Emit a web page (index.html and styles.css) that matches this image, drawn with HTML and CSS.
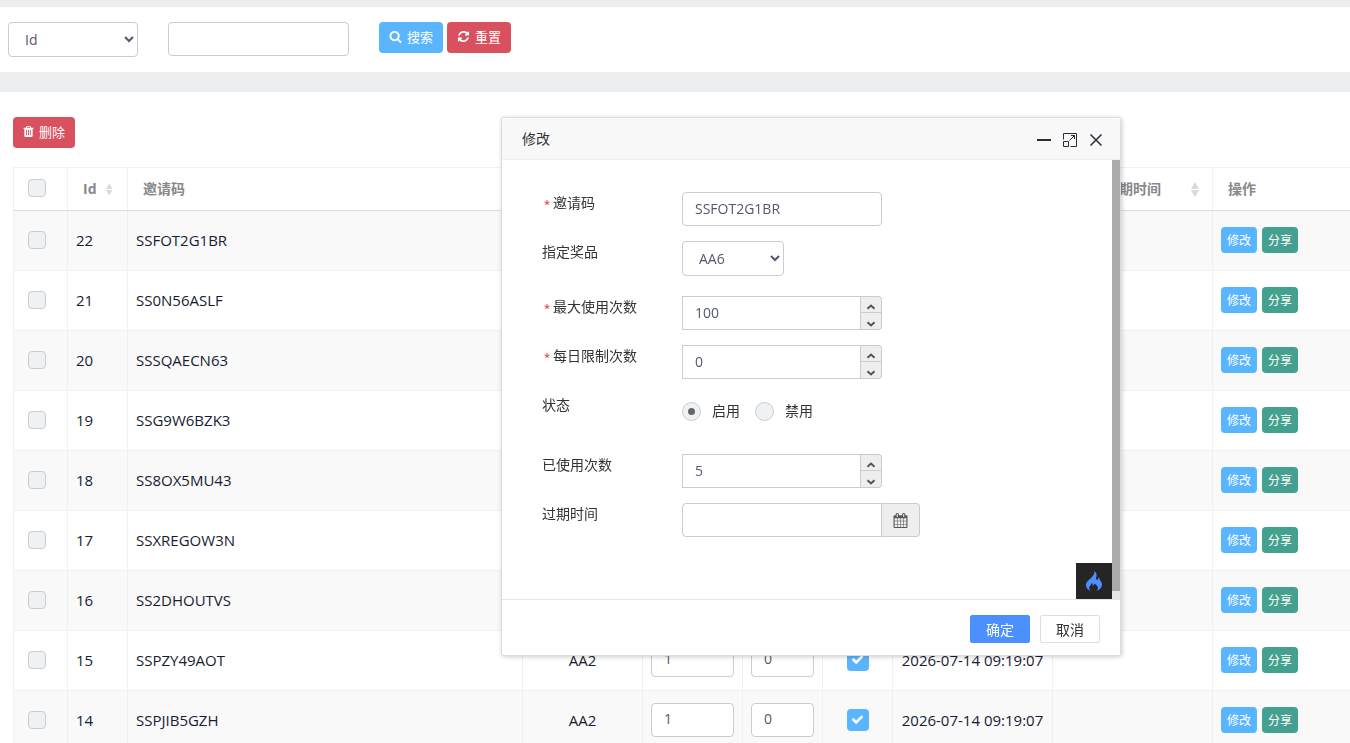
FILE: index.html
```html
<!DOCTYPE html>
<html lang="zh-CN">
<head>
  <meta charset="utf-8">
  <title>邀请码</title>
  <link rel="stylesheet" href="styles.css">
</head>

<body>
  <!-- shared icons -->
  <svg class="sprite" aria-hidden="true">
    <symbol id="icon-search" viewBox="0 0 1792 1792"><path d="M1216 832q0-185-131.500-316.500t-316.500-131.500-316.500 131.500-131.500 316.500 131.500 316.500 316.500 131.500 316.500-131.500 131.500-316.500zm512 832q0 52-38 90t-90 38q-54 0-90-38l-343-342q-179 124-399 124-143 0-273.500-55.500t-225-150-150-225-55.500-273.500 55.500-273.500 150-225 225-150 273.500-55.500 273.500 55.500 225 150 150 225 55.500 273.500q0 220-124 399l343 343q37 37 37 90z"/></symbol>
    <symbol id="icon-refresh" viewBox="0 0 1792 1792"><path d="M1639 1056q0 5-1 7-64 268-268 434.500t-478 166.500q-146 0-282.500-55t-243.500-157l-129 129q-19 19-45 19t-45-19-19-45v-448q0-26 19-45t45-19h448q26 0 45 19t19 45-19 45l-137 137q71 66 161 102t187 36q134 0 250-65t186-179q11-17 53-117 8-23 30-23h192q13 0 22.500 9.500t9.500 22.500zm25-800v448q0 26-19 45t-45 19h-448q-26 0-45-19t-19-45 19-45l138-138q-148-137-349-137-134 0-250 65t-186 179q-11 17-53 117-8 23-30 23h-199q-13 0-22.500-9.500t-9.500-22.500v-7q65-268 270-434.500t480-166.500q146 0 284 55.500t245 156.500l130-129q19-19 45-19t45 19 19 45z"/></symbol>
    <symbol id="icon-trash" viewBox="192 0 1408 1792"><path d="M704 1376v-704q0-14-9-23t-23-9h-64q-14 0-23 9t-9 23v704q0 14 9 23t23 9h64q14 0 23-9t9-23zm256 0v-704q0-14-9-23t-23-9h-64q-14 0-23 9t-9 23v704q0 14 9 23t23 9h64q14 0 23-9t9-23zm256 0v-704q0-14-9-23t-23-9h-64q-14 0-23 9t-9 23v704q0 14 9 23t23 9h64q14 0 23-9t9-23zm-544-992h448l-48-117q-7-9-17-11h-317q-10 2-17 11zm928 32v64q0 14-9 23t-23 9h-96v948q0 83-47 143.500t-113 60.500h-832q-66 0-113-58.500t-47-141.500v-952h-96q-14 0-23-9t-9-23v-64q0-14 9-23t23-9h309l70-167q15-37 54-63t79-26h320q40 0 79 26t54 63l70 167h309q14 0 23 9t9 23z"/></symbol>
    <symbol id="icon-check" viewBox="0 0 1792 1792"><path d="M1671 566q0 40-28 68l-724 724-136 136q-28 28-68 28t-68-28l-136-136-362-362q-28-28-28-68t28-68l136-136q28-28 68-28t68 28l294 295 656-657q28-28 68-28t68 28l136 136q28 28 28 68z"/></symbol>
    <symbol id="icon-calendar" viewBox="0 0 1792 1792"><path d="M192 1664h288v-288h-288v288zm352 0h320v-288h-320v288zm-352-352h288v-320h-288v320zm352 0h320v-320h-320v320zm-352-384h288v-288h-288v288zm736 736h320v-288h-320v288zm-384-736h320v-288h-320v288zm768 736h288v-288h-288v288zm-384-352h320v-320h-320v320zm-352-864v-288q0-13-9.500-22.500t-22.500-9.500h-64q-13 0-22.500 9.500t-9.500 22.500v288q0 13 9.500 22.500t22.500 9.500h64q13 0 22.500-9.500t9.500-22.500zm736 864h288v-320h-288v320zm-384-384h320v-288h-320v288zm384 0h288v-288h-288v288zm32-480v-288q0-13-9.500-22.500t-22.500-9.500h-64q-13 0-22.500 9.500t-9.500 22.500v288q0 13 9.500 22.500t22.500 9.500h64q13 0 22.500-9.500t9.500-22.500zm384-64v1280q0 52-38 90t-90 38h-1408q-52 0-90-38t-38-90v-1280q0-52 38-90t90-38h128v-96q0-66 47-113t113-47h64q66 0 113 47t47 113v96h384v-96q0-66 47-113t113-47h64q66 0 113 47t47 113v96h128q52 0 90 38t38 90z"/></symbol>
    <symbol id="icon-up" viewBox="0 0 10 6"><path d="M1.500 4.800L5 1.500l3.500 3.300" fill="none" stroke="currentColor" stroke-width="2"/></symbol>
    <symbol id="icon-down" viewBox="0 0 10 6"><path d="M1.500 1.200L5 4.500l3.500-3.300" fill="none" stroke="currentColor" stroke-width="2"/></symbol>
    <symbol id="icon-sort" viewBox="0 0 8 15"><path d="M4 0l4 7H0zM4 15l4-7H0z"/></symbol>
  </svg>

  <form class="search-bar">
    <select class="form-control search-field" aria-label="字段">
      <option>Id</option>
    </select>
    <input type="text" class="form-control search-keyword" aria-label="关键字">
    <div class="search-buttons">
      <button type="button" class="btn blue"><svg class="icon"><use href="#icon-search"/></svg>搜索</button>
      <button type="button" class="btn red"><svg class="icon"><use href="#icon-refresh"/></svg>重置</button>
    </div>
  </form>

  <main class="portlet">
    <button type="button" class="btn red"><svg class="icon icon-trash"><use href="#icon-trash"/></svg>删除</button>

    <table class="data-table">
      <colgroup>
        <col class="col-check">
        <col class="col-id">
        <col class="col-code">
        <col class="col-prize">
        <col class="col-max">
        <col class="col-day">
        <col class="col-status">
        <col class="col-time">
        <col class="col-time">
        <col>
      </colgroup>
      <thead>
        <tr>
          <th><input type="checkbox" class="check" aria-label="全选"></th>
          <th><div class="sortable">Id<svg class="sort"><use href="#icon-sort"/></svg></div></th>
          <th>邀请码</th>
          <th></th>
          <th></th>
          <th></th>
          <th></th>
          <th></th>
          <th><div class="sortable spread"><span>过期时间</span><svg class="sort"><use href="#icon-sort"/></svg></div></th>
          <th>操作</th>
        </tr>
      </thead>
      <tbody>
        <tr>
          <td><input type="checkbox" class="check" aria-label="22"></td>
          <td>22</td>
          <td>SSFOT2G1BR</td>
          <td></td><td></td><td></td><td></td><td></td><td></td>
          <td><div class="actions"><button type="button" class="btn-xs blue">修改</button><button type="button" class="btn-xs green">分享</button></div></td>
        </tr>
        <tr>
          <td><input type="checkbox" class="check" aria-label="21"></td>
          <td>21</td>
          <td>SS0N56ASLF</td>
          <td></td><td></td><td></td><td></td><td></td><td></td>
          <td><div class="actions"><button type="button" class="btn-xs blue">修改</button><button type="button" class="btn-xs green">分享</button></div></td>
        </tr>
        <tr>
          <td><input type="checkbox" class="check" aria-label="20"></td>
          <td>20</td>
          <td>SSSQAECN63</td>
          <td></td><td></td><td></td><td></td><td></td><td></td>
          <td><div class="actions"><button type="button" class="btn-xs blue">修改</button><button type="button" class="btn-xs green">分享</button></div></td>
        </tr>
        <tr>
          <td><input type="checkbox" class="check" aria-label="19"></td>
          <td>19</td>
          <td>SSG9W6BZK3</td>
          <td></td><td></td><td></td><td></td><td></td><td></td>
          <td><div class="actions"><button type="button" class="btn-xs blue">修改</button><button type="button" class="btn-xs green">分享</button></div></td>
        </tr>
        <tr>
          <td><input type="checkbox" class="check" aria-label="18"></td>
          <td>18</td>
          <td>SS8OX5MU43</td>
          <td></td><td></td><td></td><td></td><td></td><td></td>
          <td><div class="actions"><button type="button" class="btn-xs blue">修改</button><button type="button" class="btn-xs green">分享</button></div></td>
        </tr>
        <tr>
          <td><input type="checkbox" class="check" aria-label="17"></td>
          <td>17</td>
          <td>SSXREGOW3N</td>
          <td></td><td></td><td></td><td></td><td></td><td></td>
          <td><div class="actions"><button type="button" class="btn-xs blue">修改</button><button type="button" class="btn-xs green">分享</button></div></td>
        </tr>
        <tr>
          <td><input type="checkbox" class="check" aria-label="16"></td>
          <td>16</td>
          <td>SS2DHOUTVS</td>
          <td></td><td></td><td></td><td></td><td></td><td></td>
          <td><div class="actions"><button type="button" class="btn-xs blue">修改</button><button type="button" class="btn-xs green">分享</button></div></td>
        </tr>
        <tr>
          <td><input type="checkbox" class="check" aria-label="15"></td>
          <td>15</td>
          <td>SSPZY49AOT</td>
          <td class="center">AA2</td>
          <td><input type="text" class="form-control" value="1" aria-label="最大使用次数"></td>
          <td><input type="text" class="form-control" value="0" aria-label="每日限制次数"></td>
          <td class="center"><button type="button" class="status blue" aria-label="启用"><svg class="icon"><use href="#icon-check"/></svg></button></td>
          <td class="center">2026-07-14 09:19:07</td>
          <td></td>
          <td><div class="actions"><button type="button" class="btn-xs blue">修改</button><button type="button" class="btn-xs green">分享</button></div></td>
        </tr>
        <tr>
          <td><input type="checkbox" class="check" aria-label="14"></td>
          <td>14</td>
          <td>SSPJIB5GZH</td>
          <td class="center">AA2</td>
          <td><input type="text" class="form-control" value="1" aria-label="最大使用次数"></td>
          <td><input type="text" class="form-control" value="0" aria-label="每日限制次数"></td>
          <td class="center"><button type="button" class="status blue" aria-label="启用"><svg class="icon"><use href="#icon-check"/></svg></button></td>
          <td class="center">2026-07-14 09:19:07</td>
          <td></td>
          <td><div class="actions"><button type="button" class="btn-xs blue">修改</button><button type="button" class="btn-xs green">分享</button></div></td>
        </tr>
      </tbody>
    </table>
  </main>

  <div class="layer" role="dialog" aria-labelledby="layer-title">
    <div class="layer-title">
      <span id="layer-title">修改</span>
      <div class="layer-tools">
        <button type="button" aria-label="最小化"><svg viewBox="0 0 16 16"><path d="M1 8h14" stroke-width="2"/></svg></button>
        <button type="button" aria-label="最大化"><svg viewBox="0 0 16 16"><path d="M1.500 7.500v-6h13v13h-6M1.500 9.500h5v5h-5zM7.500 8.500l5-5M9 3.500h3.500V7"/></svg></button>
        <button type="button" aria-label="关闭"><svg viewBox="0 0 16 16"><path d="M2.500 2.500l11 11M13.500 2.500l-11 11" stroke-width="1.500"/></svg></button>
      </div>
    </div>

    <div class="layer-body">
      <form class="layer-form">
        <div class="form-group">
          <label for="code"><span class="required">*</span>邀请码</label>
          <input type="text" id="code" class="form-control" value="SSFOT2G1BR">
        </div>
        <div class="form-group tall">
          <label for="prize">指定奖品</label>
          <select id="prize" class="form-control">
            <option>AA6</option>
          </select>
        </div>
        <div class="form-group">
          <label for="max"><span class="required">*</span>最大使用次数</label>
          <div class="spinner">
            <input type="text" id="max" class="form-control" value="100">
            <div class="spinner-buttons">
              <button type="button" aria-label="增加"><svg><use href="#icon-up"/></svg></button>
              <button type="button" aria-label="减少"><svg><use href="#icon-down"/></svg></button>
            </div>
          </div>
        </div>
        <div class="form-group">
          <label for="day"><span class="required">*</span>每日限制次数</label>
          <div class="spinner">
            <input type="text" id="day" class="form-control" value="0">
            <div class="spinner-buttons">
              <button type="button" aria-label="增加"><svg><use href="#icon-up"/></svg></button>
              <button type="button" aria-label="减少"><svg><use href="#icon-down"/></svg></button>
            </div>
          </div>
        </div>
        <div class="form-group radio-group" role="radiogroup" aria-labelledby="status-label">
          <span class="label" id="status-label">状态</span>
          <div class="radios">
            <label><input type="radio" name="status" checked>启用</label>
            <label><input type="radio" name="status">禁用</label>
          </div>
        </div>
        <div class="form-group">
          <label for="used">已使用次数</label>
          <div class="spinner">
            <input type="text" id="used" class="form-control" value="5">
            <div class="spinner-buttons">
              <button type="button" aria-label="增加"><svg><use href="#icon-up"/></svg></button>
              <button type="button" aria-label="减少"><svg><use href="#icon-down"/></svg></button>
            </div>
          </div>
        </div>
        <div class="form-group">
          <label for="expire">过期时间</label>
          <div class="date-picker">
            <input type="text" id="expire" class="form-control">
            <button type="button" aria-label="选择日期"><svg class="icon"><use href="#icon-calendar"/></svg></button>
          </div>
        </div>
      </form>
      <a href="#" class="debug" aria-label="调试工具">
        <svg viewBox="0 0 16 20"><path d="M8.200 0c.6 2.800-.7 4.600-2.700 6.500C2.800 9 0 11 0 14.200c0 2.600 1.800 4.600 4.900 5.500-1.300-1-1.900-2.200-1.600-3.400.4-1.500 2-2.300 2.100-4.300 1.100.6 1.500 1.600 1.300 2.800.9-.3 1.300-1.200 1.200-2.200 2 1 4.600 2.600 4 5-.2.900-.8 1.600-1.500 2.100 3-.8 5.300-2.600 5.600-5.700.3-3.500-3.200-4.700-2.900-7.500-1.100.4-1.500 1.300-1.400 2.500-1.200 0-1.900-.9-1.700-2.100C10.500 5.300 11.700 2.200 8.200 0z"/></svg>
      </a>
      <div class="scrollbar"><div class="thumb"></div></div>
    </div>

    <div class="layer-footer">
      <button type="button" class="layer-btn primary">确定</button>
      <button type="button" class="layer-btn">取消</button>
    </div>
  </div>
</body>
</html>
```
FILE: styles.css
```css
* {
  box-sizing: border-box;
}

html,
body {
  height: 100%;
  margin: 0;
}

body {
  display: flex;
  flex-direction: column;
  overflow: hidden;
  background: #eceef0;
  color: #333;
  font-family: "Segoe UI", "Open Sans", "Noto Sans CJK SC", sans-serif;
  font-size: 14px;
  line-height: 20px;
}

button,
input,
select {
  font-family: inherit;
}

button {
  margin: 0;
  padding: 0;
  border: 0;
  cursor: pointer;
}

.sprite {
  position: absolute;
  width: 0;
  height: 0;
}

.icon {
  width: 13px;
  height: 13px;
  fill: currentColor;
}

.icon-trash {
  width: 11px;
}

.form-control {
  width: 100%;
  height: 34px;
  padding: 5px 12px 7px;
  border: 1px solid #ccc;
  border-radius: 4px;
  background: #fff;
  color: #555770;
  font-size: 14px;
}

select.form-control {
  height: 35px;
  padding: 6px 12px;
}

/* Buttons */
.btn {
  display: inline-flex;
  align-items: center;
  gap: 5px;
  height: 31px;
  padding: 0 10px 2px;
  border-radius: 4px;
  color: #fff;
  font-size: 13px;
}

.btn-xs {
  width: 36px;
  height: 26px;
  border-radius: 4px;
  color: #fff;
  font-size: 12px;
}

.blue {
  background: #5ab5ff;
}

.red {
  background: #d9505e;
}

.green {
  background: #44a08f;
}

/* Search */
.search-bar {
  display: flex;
  flex: none;
  height: 65px;
  margin: 7px 0 20px;
  padding: 15px 8px;
  background: #fff;
}

.search-field {
  width: 130px;
  margin-right: 30px;
}

.search-keyword {
  width: 181px;
  margin-right: 30px;
}

.search-buttons {
  display: flex;
  gap: 4px;
}

/* List */
.portlet {
  flex: 1;
  min-height: 0;
  padding: 25px 0 0 13px;
  overflow: hidden;
  background: #fff;
}

.data-table {
  width: 100%;
  margin-top: 19px;
  border-collapse: collapse;
  table-layout: fixed;
  color: #181c32;
}

.col-check {
  width: 54px;
}

.col-id {
  width: 60px;
}

.col-code {
  width: 395px;
}

.col-prize {
  width: 120px;
}

.col-max {
  width: 100px;
}

.col-day {
  width: 80px;
}

.col-status {
  width: 70px;
}

.col-time {
  width: 160px;
}

.data-table th,
.data-table td {
  padding: 0 8px 2px;
  border: 1px solid #f1f1f1;
  text-align: left;
  white-space: nowrap;
}

.data-table th {
  height: 43px;
  padding: 0 15px;
  border-bottom-color: #ddd;
  color: #888;
  font-weight: bold;
}

.data-table td {
  height: 60px;
  font-size: 15px;
}

.data-table th:last-child,
.data-table td:last-child {
  border-right: 0;
}

.data-table tbody tr:nth-child(odd) {
  background: #f9f9f9;
}

.data-table th:first-child,
.data-table td:first-child {
  padding: 0 14px 2px;
}

.data-table .center {
  padding-right: 0;
  padding-left: 0;
  text-align: center;
}

.sortable {
  display: flex;
  align-items: center;
  gap: 9px;
}

.spread {
  margin-right: -2px;
  padding-left: 16px;
}

.spread span {
  flex: 1;
  text-align: center;
}

.sort {
  width: 8px;
  height: 15px;
  fill: #d9d9d9;
}

.check {
  display: block;
  width: 18px;
  height: 18px;
  margin: 0;
  border: 1px solid #ccc;
  border-radius: 4px;
  background: #eef2f5;
  appearance: none;
}

.status {
  display: flex;
  justify-content: center;
  align-items: center;
  width: 22px;
  height: 22px;
  margin: 0 auto;
  border-radius: 4px;
  color: #fff;
}

.actions {
  display: flex;
  gap: 5px;
}

/* Edit layer */
.layer {
  position: fixed;
  top: 117px;
  left: 501px;
  display: flex;
  flex-direction: column;
  width: 620px;
  height: 539px;
  border: 1px solid #ddd;
  border-radius: 2px;
  background: #fff;
  box-shadow: 1px 1px 5px rgba(0, 0, 0, 0.2);
}

.layer-title {
  display: flex;
  justify-content: space-between;
  align-items: center;
  height: 42px;
  padding: 0 16px 0 20px;
  border-bottom: 1px solid #eee;
  background: #f8f8f8;
}

.layer-tools {
  display: flex;
  gap: 10px;
  padding-top: 2px;
}

.layer-tools button {
  width: 16px;
  height: 16px;
  background: none;
}

.layer-tools svg {
  display: block;
  fill: none;
  stroke: #2d2c3b;
}

.layer-body {
  position: relative;
  display: flex;
  flex: 1;
}

.layer-form {
  flex: 1;
  padding: 32px 40px 0;
}

.form-group {
  display: grid;
  grid-template-columns: 140px max-content;
  align-items: start;
  min-height: 34px;
  margin-bottom: 15px;
}

.form-group > label,
.form-group .label {
  line-height: 22px;
}

.form-group > .form-control,
.spinner,
.date-picker .form-control {
  width: 200px;
}

.form-group > select.form-control {
  width: 102px;
}

.tall {
  min-height: 40px;
}

.radio-group {
  min-height: 45px;
}

.required {
  padding: 0 3px 0 2px;
  color: #e02222;
  font-size: 11px;
}

.spinner,
.date-picker {
  display: flex;
}

.spinner .form-control {
  flex: 1;
  min-width: 0;
  border-radius: 0;
}

.spinner-buttons {
  display: flex;
  flex-direction: column;
  width: 21px;
  border: 1px solid #ccc;
  border-left: 0;
  border-radius: 0 4px 4px 0;
  background: #eee;
}

.spinner-buttons button {
  display: flex;
  justify-content: center;
  align-items: center;
  height: 15px;
  padding-top: 5px;
  background: none;
  color: #555;
}

.spinner-buttons button + button {
  height: 17px;
  border-top: 1px solid #ccc;
}

.spinner-buttons svg {
  width: 10px;
  height: 6px;
}

.radios {
  display: flex;
  gap: 15px;
  padding-top: 7px;
}

.radios label {
  display: flex;
  align-items: center;
  gap: 11px;
}

.radios input {
  display: grid;
  place-items: center;
  width: 19px;
  height: 19px;
  margin: 0;
  border: 1px solid #ccc;
  border-radius: 50%;
  background: #eef2f5;
  appearance: none;
}

.radios input:checked::before {
  content: "";
  width: 7px;
  height: 7px;
  border-radius: 50%;
  background: #666;
}

.date-picker .form-control {
  border-radius: 4px 0 0 4px;
}

.date-picker button {
  width: 38px;
  border: 1px solid #ccc;
  border-left: 0;
  border-radius: 0 4px 4px 0;
  background: #eee;
  color: #555;
}

.date-picker .icon {
  display: block;
  width: 15px;
  height: 15px;
  margin: 0 auto;
}

.debug {
  position: absolute;
  right: 8px;
  bottom: 0;
  display: flex;
  justify-content: center;
  align-items: center;
  width: 36px;
  height: 36px;
  background: #252525;
}

.debug svg {
  width: 16px;
  height: 20px;
  fill: #4c8dff;
}

.scrollbar {
  width: 8px;
  padding-bottom: 8px;
  background: #e6e6e6;
}

.thumb {
  height: 100%;
  background: #aaa;
}

.layer-footer {
  display: flex;
  justify-content: flex-end;
  gap: 10px;
  height: 56px;
  padding: 15px 20px;
  border-top: 1px solid #e6e6e6;
}

.layer-btn {
  width: 60px;
  height: 28px;
  border: 1px solid #dedede;
  border-radius: 2px;
  background: #fff;
  color: #333;
  font-size: 14px;
}

.layer-btn.primary {
  border-color: #4c8fff;
  background: #4c8fff;
  color: #fff;
}
```
